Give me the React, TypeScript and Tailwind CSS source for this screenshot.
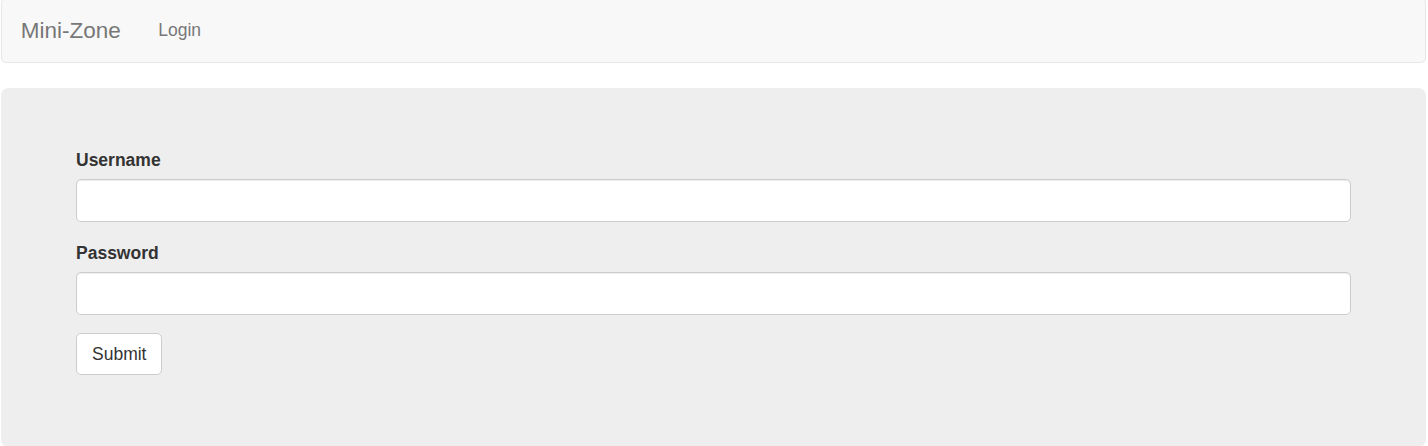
import type { FC } from "react";

const fields = [
  { id: "username", label: "Username", type: "text" },
  { id: "password", label: "Password", type: "password" },
];

const App: FC = () => {
  return (
    <div className="min-h-[446px] bg-white font-['Liberation_Sans',Arial,sans-serif] text-[17.5px] leading-[25px] text-[#333]">
      {/* Navbar */}
      <nav className="-mt-[2px] ml-[1px] mr-[2px] mb-[25px] flex min-h-[62.5px] items-start rounded-[5px] border border-[#e7e7e7] bg-[#f8f8f8] px-[18.75px]">
        <a className="block h-[62.5px] py-[18.75px] pr-[18.75px] text-[22.5px] leading-[25px] text-[#777]">
          Mini-Zone
        </a>
        <a className="block py-[18.75px] px-[18.75px] text-[17.5px] leading-[25px] text-[#777]">
          Login
        </a>
      </nav>

      {/* Jumbotron */}
      <div className="ml-[1px] mr-[2px] rounded-[7.5px] bg-[#eeeeee] px-[75px] pt-[60px] pb-[71.5px]">
        <form>
          {fields.map((f) => (
            <div key={f.id} className="mb-[18.75px]">
              <label
                htmlFor={f.id}
                className="mb-[6.25px] block font-bold leading-[25px] text-[#333]"
              >
                {f.label}
              </label>
              <input
                id={f.id}
                type={f.type}
                className="block h-[43px] w-full rounded-[5px] border border-[#ccc] bg-white px-[15px] shadow-[inset_0_1px_1px_rgba(0,0,0,0.075)] outline-none"
              />
            </div>
          ))}
          <button
            type="submit"
            className="-mt-[0.5px] rounded-[5px] border border-[#ccc] bg-white px-[15px] py-[7.5px] leading-[25px] text-[#333]"
          >
            Submit
          </button>
        </form>
      </div>
    </div>
  );
};

export default App;
